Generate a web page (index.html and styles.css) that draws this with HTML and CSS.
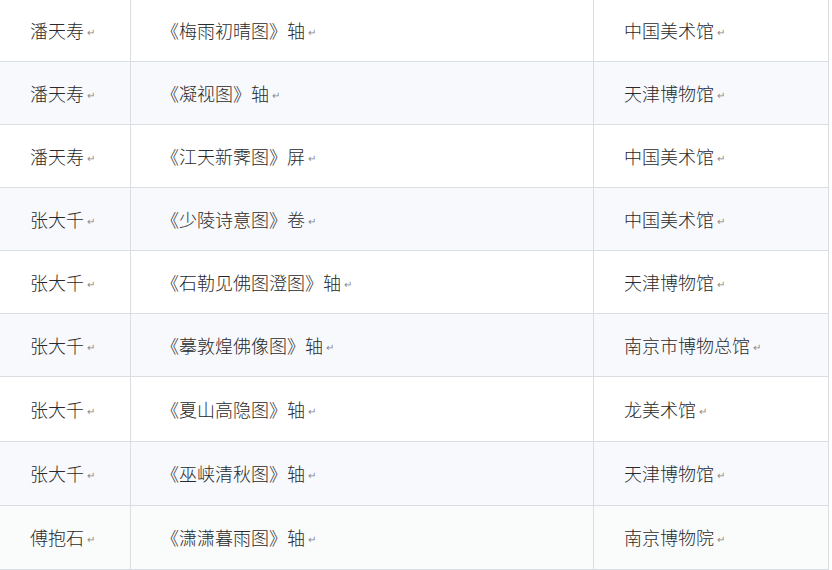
FILE: index.html
```html
<!DOCTYPE html>
<html lang="zh">
<head>
<meta charset="utf-8">
<link rel="stylesheet" href="styles.css">
</head>
<body>
<div class="table">
  <div class="row h62"><div class="c1">潘天寿<span class="rm">↵</span></div><div class="c2">《梅雨初晴图》轴<span class="rm">↵</span></div><div class="c3">中国美术馆<span class="rm">↵</span></div></div>
  <div class="row alt h63"><div class="c1">潘天寿<span class="rm">↵</span></div><div class="c2">《凝视图》轴<span class="rm">↵</span></div><div class="c3">天津博物馆<span class="rm">↵</span></div></div>
  <div class="row h63"><div class="c1">潘天寿<span class="rm">↵</span></div><div class="c2">《江天新霁图》屏<span class="rm">↵</span></div><div class="c3">中国美术馆<span class="rm">↵</span></div></div>
  <div class="row alt h63"><div class="c1">张大千<span class="rm">↵</span></div><div class="c2">《少陵诗意图》卷<span class="rm">↵</span></div><div class="c3">中国美术馆<span class="rm">↵</span></div></div>
  <div class="row h63"><div class="c1">张大千<span class="rm">↵</span></div><div class="c2">《石勒见佛图澄图》轴<span class="rm">↵</span></div><div class="c3">天津博物馆<span class="rm">↵</span></div></div>
  <div class="row alt h63"><div class="c1">张大千<span class="rm">↵</span></div><div class="c2">《摹敦煌佛像图》轴<span class="rm">↵</span></div><div class="c3">南京市博物总馆<span class="rm">↵</span></div></div>
  <div class="row h65"><div class="c1">张大千<span class="rm">↵</span></div><div class="c2">《夏山高隐图》轴<span class="rm">↵</span></div><div class="c3">龙美术馆<span class="rm">↵</span></div></div>
  <div class="row alt h64"><div class="c1">张大千<span class="rm">↵</span></div><div class="c2">《巫峡清秋图》轴<span class="rm">↵</span></div><div class="c3">天津博物馆<span class="rm">↵</span></div></div>
  <div class="row last h64"><div class="c1">傅抱石<span class="rm">↵</span></div><div class="c2">《潇潇暮雨图》轴<span class="rm">↵</span></div><div class="c3">南京博物院<span class="rm">↵</span></div></div>
</div>
</body>
</html>
```
FILE: styles.css
```css
html, body {
  margin: 0;
  padding: 0;
  background: #ffffff;
}
body {
  font-family: "Noto Sans CJK SC", "Noto Sans", sans-serif;
  font-size: 18px;
  font-weight: 300;
  color: #2a2a2a;
}
.table {
  width: 829px;
  display: flex;
  flex-direction: column;
}
.row {
  display: grid;
  grid-template-columns: 131px 463px 235px;
  box-sizing: border-box;
  border-bottom: 1px solid #dadde2;
  background: #ffffff;
}
.row.alt {
  background: #f7f9fd;
}
.row.last {
  background: #fafbfb;
}
.h62 { height: 62px; }
.h63 { height: 63px; }
.h64 { height: 64px; }
.h65 { height: 65px; }
.c1, .c2, .c3 {
  display: flex;
  align-items: center;
  box-sizing: border-box;
  padding-left: 30px;
  padding-bottom: 1px;
  white-space: nowrap;
  border-right: 1px solid #dadde2;
}
.rm {
  font-size: 10px;
  font-weight: 400;
  color: #8a8a8a;
  margin-left: 3px;
  margin-top: 3px;
}
```
